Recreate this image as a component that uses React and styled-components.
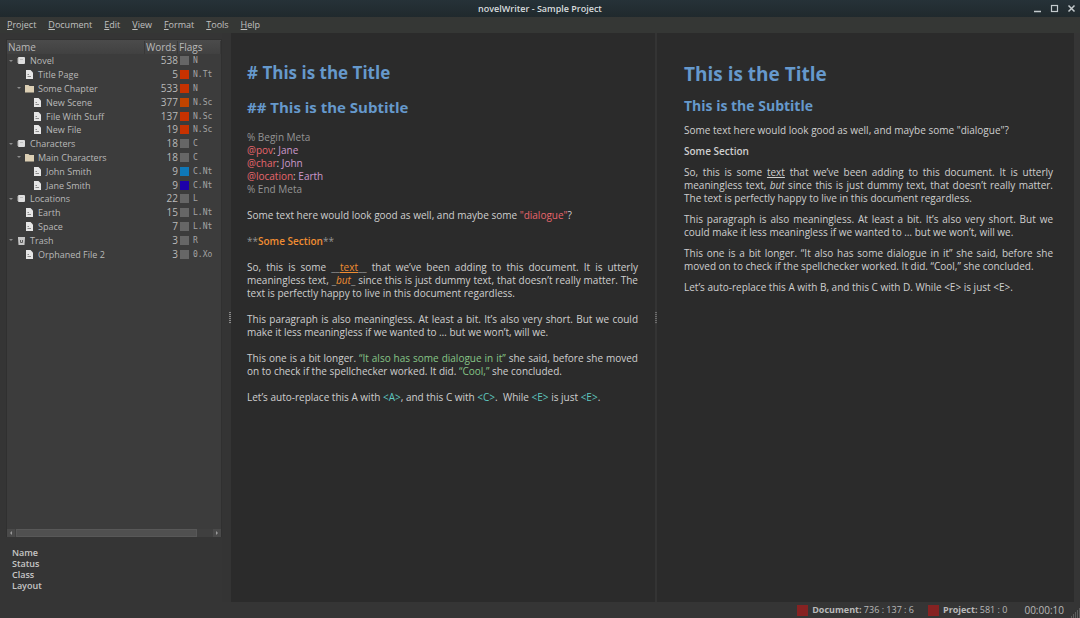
import React from "react";
import styled, { createGlobalStyle } from "styled-components";

const GlobalStyle = createGlobalStyle`
  * {
    box-sizing: border-box;
  }
  body {
    margin: 0;
    background: #353535;
    color: #b9b9b9;
    font-family: "Open Sans", "Noto Sans", sans-serif;
    font-size: 10px;
  }
  button {
    border: 0;
    padding: 0;
    background: none;
    color: inherit;
    font: inherit;
  }
  h1, h2, p {
    margin: 0;
  }
  b {
    font-weight: 600;
  }
`;

const Window = styled.div`
  display: flex;
  flex-direction: column;
  min-height: 100vh;
`;

const TitleBar = styled.header`
  display: grid;
  grid-template-columns: 1fr auto 1fr;
  align-items: center;
  height: 17px;
  padding: 0 4px;
  background: linear-gradient(#263238, #20292d);
`;

const WindowTitle = styled.div`
  grid-column: 2;
  color: #d8dcde;
  font-size: 9px;
  font-weight: 600;
  line-height: 16px;
`;

const WindowButtons = styled.div`
  display: flex;
  justify-content: flex-end;
  gap: 8px;
`;

const WindowButton = styled.button`
  display: flex;
  color: #c3cacd;
`;

const MenuBar = styled.nav`
  display: flex;
  align-items: center;
  gap: 12px;
  height: 16px;
  padding: 0 7px;
  background: #353735;
`;

const MenuButton = styled.button`
  font-size: 9px;
  line-height: 16px;
  color: #c0c0c0;

  u {
    text-underline-offset: 1px;
  }
`;

const Main = styled.main`
  display: grid;
  flex: 1;
  grid-template-columns: 222px 9px minmax(0, 424fr) 2px minmax(0, 417fr);
  padding-right: 6px;
`;

const SidePanel = styled.aside`
  display: flex;
  flex-direction: column;
  padding: 6px 0 11px 6px;
`;

const TreeBox = styled.div`
  display: flex;
  flex: 1;
  flex-direction: column;
  border: 1px solid #303030;
  border-bottom: 0;
  background: #3c3c3c;
`;

const TreeTable = styled.table`
  width: 100%;
  height: 221px;
  border-collapse: collapse;
  table-layout: fixed;
  font-size: 9px;
  line-height: 13px;

  td,
  th {
    padding: 0;
    white-space: nowrap;
  }
`;

const HeadCell = styled.th`
  width: ${({ $width }) => $width || "auto"};
  height: 14px;
  background: linear-gradient(#4b4b4b, #414141);
  color: #b9b9b9;
  font-size: 10px;
  font-weight: 400;
  text-align: ${({ $align }) => $align || "left"};

  span {
    display: block;
    padding: 0 1px;
    border-right: 1px solid #383838;
  }
`;

const ItemLabel = styled.div`
  display: flex;
  align-items: center;
  padding-left: ${({ $depth }) => 1 + $depth * 8}px;

  svg {
    flex: none;
  }
`;

const Arrow = styled.span`
  display: flex;
  flex: none;
  width: 9px;
`;

const ItemName = styled.span`
  padding-left: 4px;
`;

const WordCount = styled.td`
  font-size: 10px;
  text-align: right;
`;

const Flags = styled.div`
  display: flex;
  align-items: center;
  gap: 4px;
  padding-left: 2px;
  font-family: "DejaVu Sans Mono", monospace;
  font-size: 8px;
  color: #a4a4a4;
`;

const Swatch = styled.span`
  width: 9px;
  height: 9px;
  background: ${({ $color }) => $color};
`;

const ScrollBar = styled.div`
  display: flex;
  gap: 1px;
  margin-top: auto;
  height: 8px;
  background: #3f3f3f;
`;

const ScrollButton = styled.button`
  display: flex;
  align-items: center;
  justify-content: center;
  width: 8px;
  background: #4a4a4a;
`;

const ScrollTrack = styled.div`
  flex: 1;
  padding-right: 15px;
`;

const ScrollThumb = styled.div`
  height: 8px;
  border: 1px solid #585858;
  background: #505050;
`;

const Details = styled.div`
  padding: 10px 6px 0;
  color: #c6c6c6;
  font-size: 9px;
  font-weight: 600;
  line-height: 11px;
`;

const Splitter = styled.div`
  display: flex;
  align-items: center;
  justify-content: flex-end;
  background: #343434;
`;

const SplitterGrip = styled.div`
  width: 2px;
  height: 12px;
  background: repeating-linear-gradient(${({ $color }) => $color} 0 1px, #3a3a3a 1px 2px);
`;

const Document = styled.section`
  display: flex;
  flex-direction: column;
  gap: ${({ $gap }) => $gap}px;
  padding: ${({ $padding }) => $padding};
  background: #2b2b2b;
  color: #cfcfcf;
  line-height: 13px;
  text-align: justify;
`;

const Title = styled.h1`
  color: #6699cc;
  font-size: ${({ $size }) => $size}px;
  font-weight: 700;
  line-height: ${({ $line }) => $line}px;
`;

const Subtitle = styled.h2`
  color: #6699cc;
  font-size: ${({ $size }) => $size}px;
  font-weight: 700;
  line-height: 21px;
`;

const Token = styled.span`
  color: ${({ $color }) => $color};
`;

const StatusBar = styled.footer`
  display: flex;
  align-items: center;
  justify-content: flex-end;
  height: 16px;
`;

const StatusItem = styled.div`
  display: flex;
  align-items: center;
  gap: 4px;
  margin-right: ${({ $after }) => $after}px;
  font-size: ${({ $size }) => $size}px;
  line-height: 16px;

  b {
    font-weight: 700;
  }
`;

const StatusLight = styled.span`
  width: 11px;
  height: 11px;
  background: #862222;
`;

const colors = {
  hidden: "#949494",
  keyword: "#e8666c",
  value: "#cc99cc",
  emphasis: "#f08d32",
  dialogue: "#86c586",
  quote: "#e8666c",
  replace: "#5fc8c0",
};

const menus = ["Project", "Document", "Edit", "View", "Format", "Tools", "Help"];

const GREY = "#666666";
const RED = "#c83200";

const items = [
  { name: "Novel", depth: 0, type: "root", words: 538, color: GREY, flags: "N" },
  { name: "Title Page", depth: 1, type: "file", words: 5, color: RED, flags: "N.Tt" },
  { name: "Some Chapter", depth: 1, type: "folder", words: 533, color: RED, flags: "N" },
  { name: "New Scene", depth: 2, type: "file", words: 377, color: "#c14400", flags: "N.Sc" },
  { name: "File With Stuff", depth: 2, type: "file", words: 137, color: RED, flags: "N.Sc" },
  { name: "New File", depth: 2, type: "file", words: 19, color: RED, flags: "N.Sc" },
  { name: "Characters", depth: 0, type: "root", words: 18, color: GREY, flags: "C" },
  { name: "Main Characters", depth: 1, type: "folder", words: 18, color: GREY, flags: "C" },
  { name: "John Smith", depth: 2, type: "file", words: 9, color: "#0f78b8", flags: "C.Nt" },
  { name: "Jane Smith", depth: 2, type: "file", words: 9, color: "#1d00aa", flags: "C.Nt" },
  { name: "Locations", depth: 0, type: "root", words: 22, color: GREY, flags: "L" },
  { name: "Earth", depth: 1, type: "file", words: 15, color: GREY, flags: "L.Nt" },
  { name: "Space", depth: 1, type: "file", words: 7, color: GREY, flags: "L.Nt" },
  { name: "Trash", depth: 0, type: "trash", words: 3, color: GREY, flags: "R" },
  { name: "Orphaned File 2", depth: 1, type: "file", words: 3, color: GREY, flags: "0.Xo" },
];

const ItemIcon = ({ type }) => {
  if (type === "folder") {
    return (
      <svg width="9" height="9" viewBox="0 0 9 9">
        <path d="M0 1h3.5l1 1H9v6.5H0z" fill="#dccfb4" />
      </svg>
    );
  }
  if (type === "file") {
    return (
      <svg width="9" height="9" viewBox="0 0 9 9">
        <path d="M1 0h4.5L8 2.500V9H1z" fill="#e6e6e6" />
        <path d="M2.500 4.500h1.500M2.500 6.500h3.500" stroke="#8c8c8c" />
      </svg>
    );
  }
  if (type === "trash") {
    return (
      <svg width="9" height="9" viewBox="0 0 9 9">
        <path d="M1 1h7v1.500H1zM1 2h7L7.500 9h-6z" fill="#c6c6c6" />
        <path d="M3.500 4v2.500h2V4" fill="none" stroke="#5d5d5d" />
      </svg>
    );
  }
  return (
    <svg width="9" height="9" viewBox="0 0 9 9">
      <rect x="1" y="1" width="7" height="7" rx="1" fill="#dedede" />
      <path d="M3 3.500h3" stroke="#bdbdbd" />
      <path d="M1 2v5" stroke="#b0b0b0" />
    </svg>
  );
};

const ProjectTree = () => (
  <TreeTable>
    <thead>
      <tr>
        <HeadCell>
          <span>Name</span>
        </HeadCell>
        <HeadCell $width="33px" $align="right">
          <span>Words</span>
        </HeadCell>
        <HeadCell $width="43px">
          <span>Flags</span>
        </HeadCell>
      </tr>
    </thead>
    <tbody>
      {items.map((item) => (
        <tr key={item.name}>
          <td>
            <ItemLabel $depth={item.depth}>
              <Arrow>
                {item.type !== "file" && (
                  <svg width="6" height="4" viewBox="0 0 6 4">
                    <path d="M1 1h4L3 3z" fill="#8c8c8c" />
                  </svg>
                )}
              </Arrow>
              <ItemIcon type={item.type} />
              <ItemName>{item.name}</ItemName>
            </ItemLabel>
          </td>
          <WordCount>{item.words}</WordCount>
          <td>
            <Flags>
              <Swatch $color={item.color} />
              {item.flags}
            </Flags>
          </td>
        </tr>
      ))}
    </tbody>
  </TreeTable>
);

const Editor = () => (
  <Document $gap={13} $padding="29px 17px 20px 16px">
    <Title $size={17} $line={22}># This is the Title</Title>
    <Subtitle $size={15}>## This is the Subtitle</Subtitle>
    <div>
      <Token as="p" $color={colors.hidden}>% Begin Meta</Token>
      <p>
        <Token $color={colors.keyword}>@pov</Token>: <Token $color={colors.value}>Jane</Token>
      </p>
      <p>
        <Token $color={colors.keyword}>@char</Token>: <Token $color={colors.value}>John</Token>
      </p>
      <p>
        <Token $color={colors.keyword}>@location</Token>: <Token $color={colors.value}>Earth</Token>
      </p>
      <Token as="p" $color={colors.hidden}>% End Meta</Token>
    </div>
    <p>
      Some text here would look good as well, and maybe some{" "}
      <Token $color={colors.quote}>"dialogue"</Token>?
    </p>
    <p>
      <Token $color={colors.hidden}>**</Token>
      <Token as="b" $color={colors.emphasis}>Some Section</Token>
      <Token $color={colors.hidden}>**</Token>
    </p>
    <p>
      So, this is some <Token $color={colors.hidden}>__</Token>
      <Token as="u" $color={colors.emphasis}>text</Token>
      <Token $color={colors.hidden}>__</Token> that we’ve been adding to this document. It is
      utterly meaningless text, <Token $color={colors.hidden}>_</Token>
      <Token as="em" $color={colors.emphasis}>but</Token>
      <Token $color={colors.hidden}>_</Token> since this is just dummy text, that doesn’t really
      matter. The text is perfectly happy to live in this document regardless.
    </p>
    <p>
      This paragraph is also meaningless. At least a bit. It’s also very short. But we could make
      it less meaningless if we wanted to … but we won’t, will we.
    </p>
    <p>
      This one is a bit longer.{" "}
      <Token $color={colors.dialogue}>“It also has some dialogue in it”</Token> she said, before
      she moved on to check if the spellchecker worked. It did.{" "}
      <Token $color={colors.dialogue}>“Cool,”</Token> she concluded.
    </p>
    <p>
      Let’s auto-replace this A with <Token $color={colors.replace}>&lt;A&gt;</Token>, and this C
      with <Token $color={colors.replace}>&lt;C&gt;</Token>.&nbsp; While{" "}
      <Token $color={colors.replace}>&lt;E&gt;</Token> is just{" "}
      <Token $color={colors.replace}>&lt;E&gt;</Token>.
    </p>
  </Document>
);

const Viewer = () => (
  <Document $gap={8} $padding="28px 21px 20px 27px">
    <Title $size={19} $line={26}>This is the Title</Title>
    <Subtitle $size={14}>This is the Subtitle</Subtitle>
    <p>Some text here would look good as well, and maybe some "dialogue"?</p>
    <p>
      <b>Some Section</b>
    </p>
    <p>
      So, this is some <u>text</u> that we’ve been adding to this document. It is utterly
      meaningless text, <em>but</em> since this is just dummy text, that doesn’t really matter.
      The text is perfectly happy to live in this document regardless.
    </p>
    <p>
      This paragraph is also meaningless. At least a bit. It’s also very short. But we could make
      it less meaningless if we wanted to … but we won’t, will we.
    </p>
    <p>
      This one is a bit longer. “It also has some dialogue in it” she said, before she moved on to
      check if the spellchecker worked. It did. “Cool,” she concluded.
    </p>
    <p>Let’s auto-replace this A with B, and this C with D. While &lt;E&gt; is just &lt;E&gt;.</p>
  </Document>
);

const App = () => (
  <>
    <GlobalStyle />
    <Window>
      <TitleBar>
        <WindowTitle>novelWriter - Sample Project</WindowTitle>
        <WindowButtons>
          <WindowButton aria-label="Minimize">
            <svg width="9" height="9" viewBox="0 0 9 9">
              <path d="M1 7.500h7" stroke="currentColor" strokeWidth="1.500" />
            </svg>
          </WindowButton>
          <WindowButton aria-label="Maximize">
            <svg width="9" height="9" viewBox="0 0 9 9">
              <rect x="1.500" y="1.500" width="6" height="6" fill="none" stroke="currentColor" strokeWidth="1.200" />
            </svg>
          </WindowButton>
          <WindowButton aria-label="Close">
            <svg width="9" height="9" viewBox="0 0 9 9">
              <path d="M1.500 1.500l6 6M7.500 1.500l-6 6" stroke="currentColor" strokeWidth="1.500" />
            </svg>
          </WindowButton>
        </WindowButtons>
      </TitleBar>

      <MenuBar>
        {menus.map((menu) => (
          <MenuButton key={menu}>
            <u>{menu[0]}</u>
            {menu.slice(1)}
          </MenuButton>
        ))}
      </MenuBar>

      <Main>
        <SidePanel>
          <TreeBox>
            <ProjectTree />
            <ScrollBar>
              <ScrollButton aria-label="Scroll left">
                <svg width="4" height="4" viewBox="0 0 4 4">
                  <path d="M3 0v4L1 2z" fill="#9a9a9a" />
                </svg>
              </ScrollButton>
              <ScrollTrack>
                <ScrollThumb />
              </ScrollTrack>
              <ScrollButton aria-label="Scroll right">
                <svg width="4" height="4" viewBox="0 0 4 4">
                  <path d="M1 0v4l2-2z" fill="#9a9a9a" />
                </svg>
              </ScrollButton>
            </ScrollBar>
          </TreeBox>
          <Details>
            <div>Name</div>
            <div>Status</div>
            <div>Class</div>
            <div>Layout</div>
          </Details>
        </SidePanel>
        <Splitter>
          <SplitterGrip $color="#8a8a8a" />
        </Splitter>
        <Editor />
        <Splitter>
          <SplitterGrip $color="#6c6c6c" />
        </Splitter>
        <Viewer />
      </Main>

      <StatusBar>
        <StatusItem $size={9} $after={14}>
          <StatusLight />
          <span>
            <b>Document:</b> 736 : 137 : 6
          </span>
        </StatusItem>
        <StatusItem $size={9} $after={17}>
          <StatusLight />
          <span>
            <b>Project:</b> 581 : 0
          </span>
        </StatusItem>
        <StatusItem $size={10} $after={7}>00:00:10</StatusItem>
        <svg width="9" height="16" viewBox="0 0 9 16">
          <path
            d="M8 7h1M6 9h1M8 9h1M4 11h1M6 11h1M8 11h1M2 13h1M4 13h1M6 13h1M8 13h1M0 15h1M2 15h1M4 15h1M6 15h1M8 15h1"
            stroke="#868686"
          />
        </svg>
      </StatusBar>
    </Window>
  </>
);

export default App;
